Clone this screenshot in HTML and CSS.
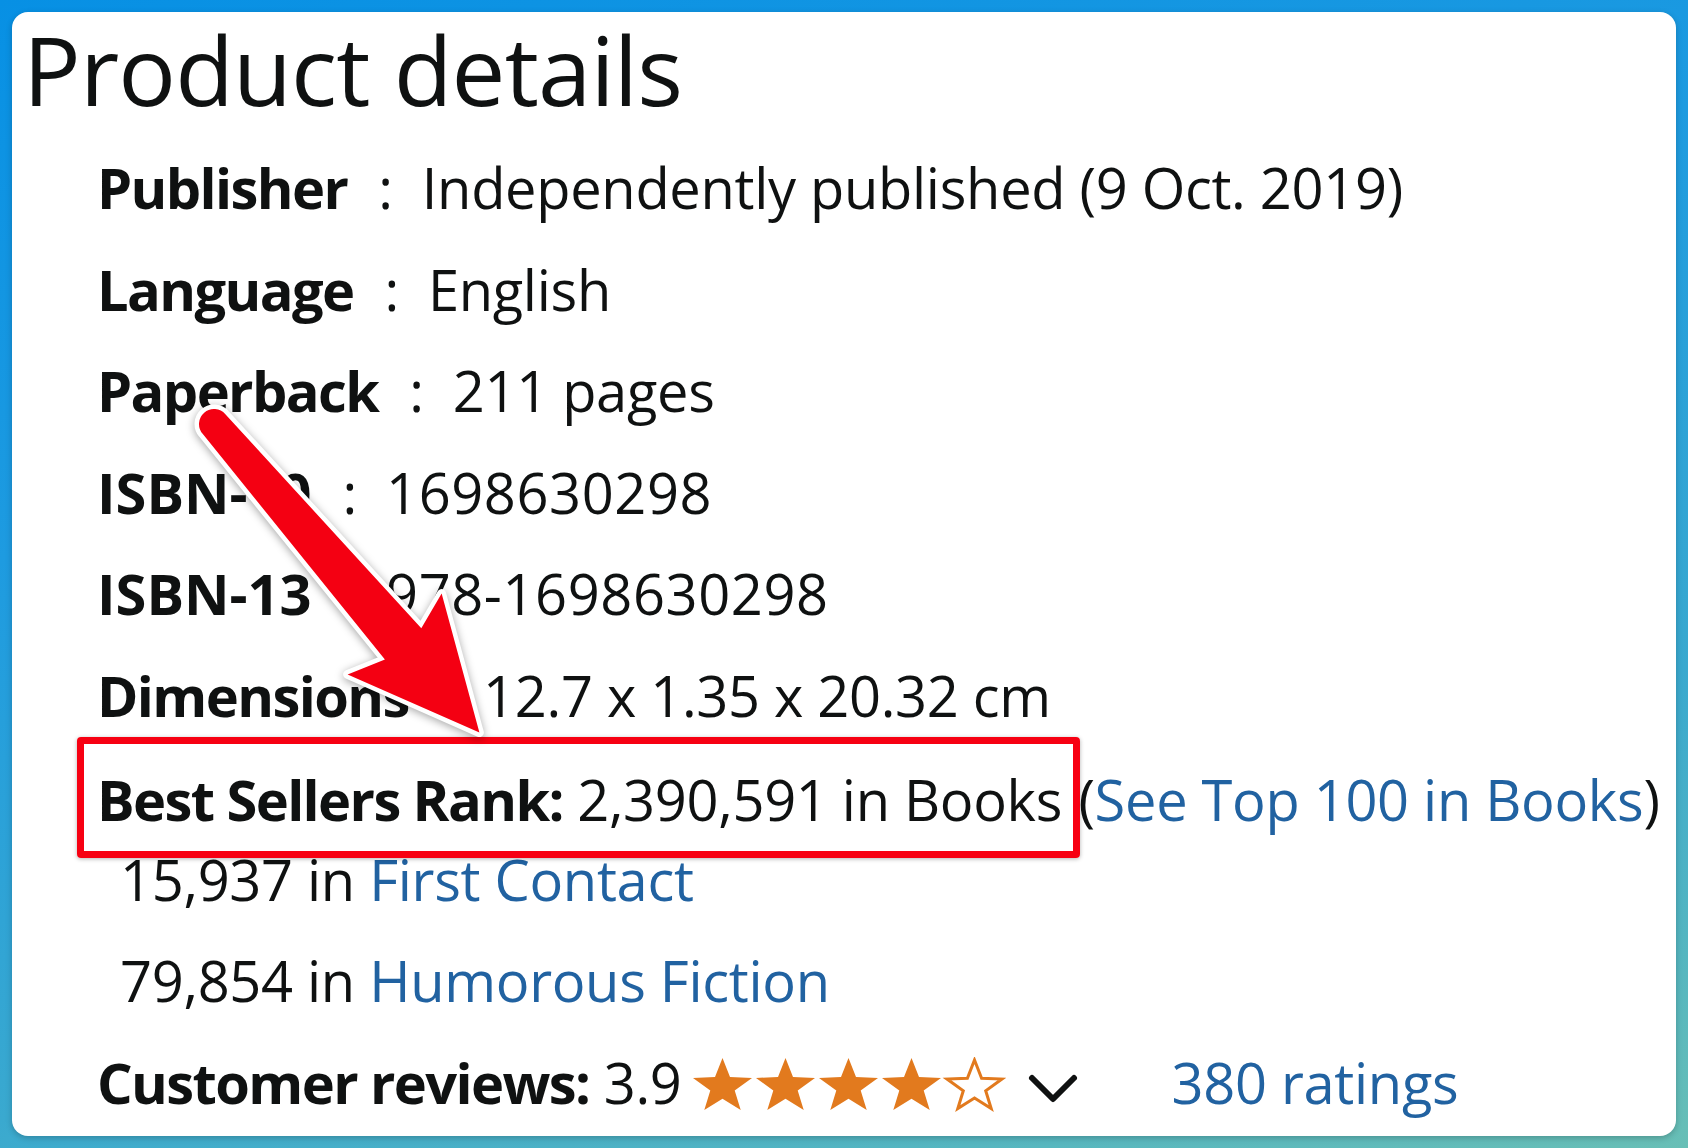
FILE: index.html
```html
<!DOCTYPE html>
<html lang="en">
<head>
<meta charset="utf-8">
<title>Product details</title>
<link rel="stylesheet" href="styles.css">
</head>
<body>
<div class="page">
  <section class="card">
    <h1 class="title">Product details</h1>
    <ul class="details">
      <li class="row"><span class="label">Publisher</span><span class="sep">:</span><span class="value">Independently published (9 Oct. 2019)</span></li>
      <li class="row"><span class="label">Language</span><span class="sep">:</span><span class="value">English</span></li>
      <li class="row"><span class="label">Paperback</span><span class="sep">:</span><span class="value">211 pages</span></li>
      <li class="row"><span class="label label-code">ISBN-10</span><span class="sep">:</span><span class="value value-num">1698630298</span></li>
      <li class="row"><span class="label label-code">ISBN-13</span><span class="sep">:</span><span class="value value-num">978-1698630298</span></li>
      <li class="row"><span class="label">Dimensions</span><span class="sep">:</span><span class="value">12.7 x 1.35 x 20.32 cm</span></li>
      <li class="row rank"><span class="label">Best Sellers Rank:</span> <span class="value">2,390,591 in Books</span> <span class="paren">(<a class="link" href="#">See Top 100 in Books</a>)</span>
        <ul class="sub">
          <li class="sub-row">15,937 in <a class="link" href="#">First Contact</a></li>
          <li class="sub-row">79,854 in <a class="link" href="#">Humorous Fiction</a></li>
        </ul>
      </li>
      <li class="row reviews"><span class="label">Customer reviews:</span> <span class="value">3.9</span><svg class="stars" width="315" height="56" viewBox="0 0 315 56" aria-label="3.9 out of 5 stars">
          <g class="star-fill">
            <path d="M31.5 1 L39 20.1 L61 20.9 L43.7 33.4 L49.7 53.1 L31.5 41.7 L13.3 53.1 L19.3 33.4 L2 20.9 L24 20.1 Z"/>
            <path transform="translate(63 0)" d="M31.5 1 L39 20.1 L61 20.9 L43.7 33.4 L49.7 53.1 L31.5 41.7 L13.3 53.1 L19.3 33.4 L2 20.9 L24 20.1 Z"/>
            <path transform="translate(126 0)" d="M31.5 1 L39 20.1 L61 20.9 L43.7 33.4 L49.7 53.1 L31.5 41.7 L13.3 53.1 L19.3 33.4 L2 20.9 L24 20.1 Z"/>
            <path transform="translate(189 0)" d="M31.5 1 L39 20.1 L61 20.9 L43.7 33.4 L49.7 53.1 L31.5 41.7 L13.3 53.1 L19.3 33.4 L2 20.9 L24 20.1 Z"/>
          </g>
          <path class="star-empty" transform="translate(252 0)" d="M31.5 3 L38.6 21.3 L59 22 L42.7 33.8 L48.2 51.5 L31.5 41 L14.8 51.5 L20.3 33.8 L4 22 L24.4 21.3 Z"/>
        </svg><svg class="chevron" width="52" height="36" viewBox="0 0 52 36" aria-hidden="true"><polyline points="5,8 26,29 47,8"/></svg><a class="link ratings" href="#">380 ratings</a></li>
    </ul>

    <div class="highlight"></div>
    <svg class="arrow" width="1664" height="1124" viewBox="0 0 1664 1124" aria-hidden="true">
      <path transform="translate(202 412) rotate(49.3)" d="M0 -15 L290 -24 L277 -62 L407 0 L277 62 L290 24 L0 15 A15 15 0 0 1 0 -15 Z"/>
    </svg>
  </section>
</div>
</body>
</html>
```

FILE: styles.css
```css
html, body {
  margin: 0;
  padding: 0;
}

body {
  width: 1688px;
  height: 1148px;
  overflow: hidden;
  background: linear-gradient(165deg, #0790e4 0%, #1e9be0 35%, #3aa9cf 70%, #68bfb6 100%);
  font-family: "Open Sans", "Noto Sans", sans-serif;
  color: #0f1111;
}

.page {
  box-sizing: border-box;
  height: 1148px;
  padding: 12px;
  display: flex;
}

.card {
  position: relative;
  flex: 1;
  box-sizing: border-box;
  background: #ffffff;
  border-radius: 16px;
  box-shadow: 0 2px 6px rgba(0, 0, 0, 0.22);
  padding: 9px 0 0 11px;
}

.title {
  margin: 0;
  font-size: 96px;
  line-height: 96px;
  font-weight: 400;
  letter-spacing: -0.85px;
}

.details {
  list-style: none;
  margin: 20px 0 0;
  padding: 0 0 0 74px;
  font-size: 56px;
}

.row {
  line-height: 101.5px;
  white-space: nowrap;
  letter-spacing: -0.3px;
}

.label {
  font-weight: 700;
  letter-spacing: -1.6px;
}

.label-code {
  letter-spacing: 0;
}

.value-num {
  letter-spacing: 0.6px;
}

.sep {
  display: inline-block;
  margin: 0 29px 0 31px;
}

.rank {
  margin-top: 3px;
}

.paren {
  margin-left: 2px;
}

.link {
  color: #2162a1;
  text-decoration: none;
}

.sub {
  list-style: none;
  margin: -21.5px 0 0 23px;
  padding: 0;
}

.sub-row {
  line-height: 101px;
}

.reviews {
  margin-top: 1px;
}

.stars {
  vertical-align: -9px;
  margin-left: 9px;
}

.star-fill path {
  fill: #e27a1e;
}

.star-empty {
  fill: #ffffff;
  stroke: #e27a1e;
  stroke-width: 3;
  stroke-linejoin: miter;
}

.chevron {
  vertical-align: -2px;
  margin-left: 21px;
}

.chevron polyline {
  fill: none;
  stroke: #0f1111;
  stroke-width: 6;
  stroke-linecap: round;
  stroke-linejoin: round;
}

.ratings {
  margin-left: 93px;
}

.highlight {
  position: absolute;
  left: 65px;
  top: 725px;
  width: 1003px;
  height: 121px;
  box-sizing: border-box;
  border: 7px solid #f70012;
  border-radius: 4px;
  box-shadow: 0 1px 4px rgba(0, 0, 0, 0.3);
  pointer-events: none;
}

.arrow {
  position: absolute;
  left: 0;
  top: 0;
  pointer-events: none;
  overflow: visible;
  filter: drop-shadow(0 2px 4px rgba(0, 0, 0, 0.35));
}

.arrow path {
  fill: #f40012;
  stroke: #ffffff;
  stroke-width: 9;
  stroke-linejoin: round;
  paint-order: stroke fill;
}
```
